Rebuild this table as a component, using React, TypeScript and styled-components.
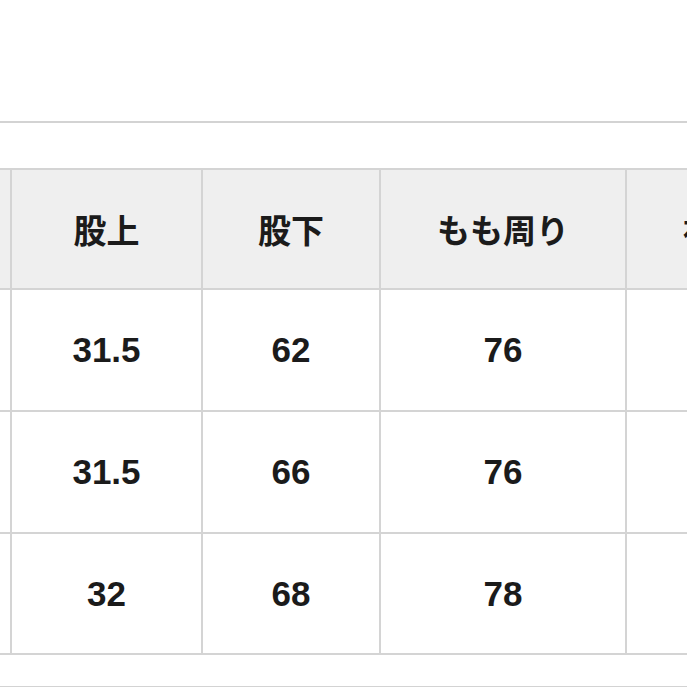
import styled, { createGlobalStyle } from 'styled-components';

const GlobalStyle = createGlobalStyle`
  html, body {
    margin: 0;
    padding: 0;
    background: #ffffff;
  }
  body {
    font-family: "Liberation Sans", "Noto Sans CJK JP", sans-serif;
    color: #1b1b1b;
  }
`;

const Page = styled.div`
  width: 687px;
  height: 687px;
  overflow: hidden;
  padding-top: 121px;
  box-sizing: border-box;
`;

const Rule = styled.div<{ $gap: number }>`
  height: 2px;
  background: #d3d3d3;
  margin-bottom: ${(p) => p.$gap}px;
`;

const BottomRule = styled.div`
  height: 2px;
  background: #d3d3d3;
  margin-top: 31px;
`;

const Table = styled.table`
  border-collapse: collapse;
  table-layout: fixed;
  margin-left: -190px;
  width: 995px;
`;

const Col = styled.col<{ $w: number }>`
  width: ${(p) => p.$w}px;
`;

const HeadCell = styled.th`
  height: 118px;
  padding: 0;
  border: 2px solid #d4d4d4;
  background: #efefef;
  font-family: "Noto Sans CJK JP", sans-serif;
  font-size: 33px;
  font-weight: 700;
  text-align: center;
  vertical-align: middle;
  white-space: nowrap;
`;

const Cell = styled.td<{ $h: number }>`
  height: ${(p) => p.$h}px;
  padding: 0;
  border: 2px solid #d4d4d4;
  font-size: 35px;
  font-weight: 700;
  text-align: center;
  vertical-align: middle;
  white-space: nowrap;
`;

const headers = ['サイズ', '股上', '股下', 'もも周り', '裾幅'];

const rows = [
  { h: 120, values: ['S', '31.5', '62', '76', '19'] },
  { h: 120, values: ['M', '31.5', '66', '76', '20'] },
  { h: 119, values: ['L', '32', '68', '78', '21'] },
];

const widths = [200, 191, 178, 246, 180];

export default function App() {
  return (
    <>
      <GlobalStyle />
      <Page>
        <Rule $gap={45} />
        <Table>
          <colgroup>
            {widths.map((w, i) => (
              <Col key={i} $w={w} />
            ))}
          </colgroup>
          <thead>
            <tr>
              {headers.map((h) => (
                <HeadCell key={h}>{h}</HeadCell>
              ))}
            </tr>
          </thead>
          <tbody>
            {rows.map((r, i) => (
              <tr key={i}>
                {r.values.map((v, j) => (
                  <Cell key={j} $h={r.h}>
                    {v}
                  </Cell>
                ))}
              </tr>
            ))}
          </tbody>
        </Table>
        <BottomRule />
      </Page>
    </>
  );
}
